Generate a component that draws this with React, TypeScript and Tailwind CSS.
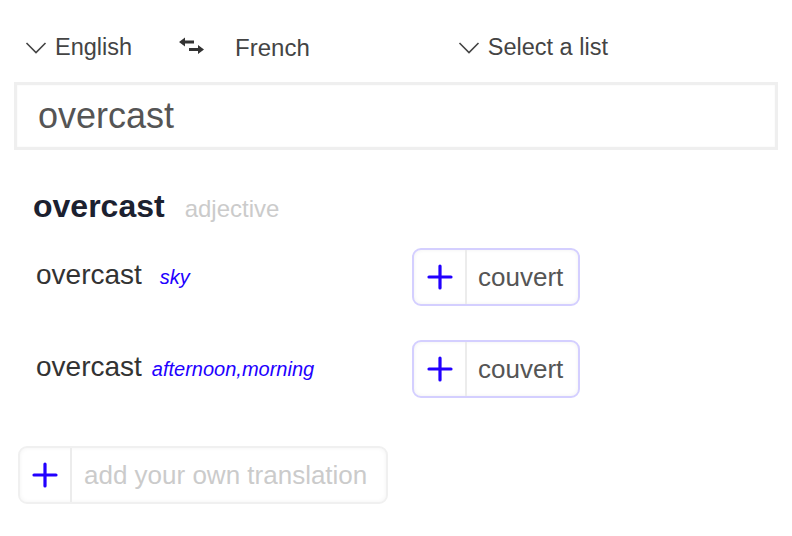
import { useState } from "react";

function Chevron() {
    return (
        <svg width="22" height="14" viewBox="0 0 22 14" fill="none" stroke="#444" strokeWidth="1.6">
            <path d="M1.5 2 L11 11.5 L20.5 2" />
        </svg>
    );
}

function SwapIcon() {
    return (
        <svg width="26" height="18" viewBox="0 0 26 18" fill="#333">
            <path d="M0 5 L6 0.5 L6 3.5 L15 3.5 L15 6.5 L6 6.5 L6 9.5 Z" />
            <path d="M25 12.5 L19 8 L19 11 L10 11 L10 14 L19 14 L19 17 Z" />
        </svg>
    );
}

function Plus() {
    return (
        <svg width="26" height="26" viewBox="0 0 26 26" stroke="#2200ff" strokeWidth="3.2" strokeLinecap="round">
            <path d="M13 2 V24 M2 13 H24" />
        </svg>
    );
}

const rows = [
    { word: "overcast", context: "sky", translation: "couvert", gap: "ml-[18px]" },
    { word: "overcast", context: "afternoon,morning", translation: "couvert", gap: "ml-[10px]" },
];

export default function App() {
    const [query, setQuery] = useState("overcast");

    return (
        <div className="w-[792px] h-[536px] bg-white overflow-hidden font-['Liberation_Sans',Arial,sans-serif]">
            {/* Language bar */}
            <div className="flex items-center h-[48px] mt-[24px] text-[23.5px] text-[#444]">
                <div className="flex items-center ml-[25px]">
                    <Chevron />
                    <span className="ml-[8px]">English</span>
                </div>
                <div className="ml-[47px] mt-[-4px]">
                    <SwapIcon />
                </div>
                <span className="ml-[30px] text-[24px]">French</span>
                <div className="flex items-center ml-[148px]">
                    <Chevron />
                    <span className="ml-[8px]">Select a list</span>
                </div>
            </div>

            {/* Search */}
            <div className="ml-[14px] mt-[10px] w-[764px] h-[68px] border-[3px] border-[#efefef] shadow-[inset_0_0_2px_rgba(0,0,0,0.05)] flex items-center">
                <input
                    value={query}
                    onChange={(e) => setQuery(e.target.value)}
                    className="w-full bg-transparent outline-none pl-[21px] text-[36px] text-[#555] font-['Liberation_Sans',Arial,sans-serif]"
                />
            </div>

            {/* Entry */}
            <div className="flex items-baseline ml-[33px] mt-[32px]">
                <span className="text-[32px] font-bold text-[#1c2130]">overcast</span>
                <span className="ml-[20px] text-[24px] text-[#cbcbcb]">adjective</span>
            </div>

            <div className="mt-[18px] flex flex-col gap-[34px]">
                {rows.map((r, i) => (
                    <div key={i} className="flex items-center">
                        <div className="w-[412px] flex items-baseline pl-[36px] mt-[-4px]">
                            <span className="text-[28px] text-[#333]">{r.word}</span>
                            <span className={`${r.gap} text-[20px] italic text-[#2200ff]`}>{r.context}</span>
                        </div>
                        <button className="flex items-stretch h-[58px] w-[168px] border-2 border-[#d4cfff] rounded-[9px] shadow-[inset_0_0_4px_rgba(0,0,0,0.06)]">
                            <span className="w-[53px] flex items-center justify-center border-r-2 border-[#ececec]">
                                <Plus />
                            </span>
                            <span className="flex items-center pl-[11px] text-[26px] text-[#555]">{r.translation}</span>
                        </button>
                    </div>
                ))}
            </div>

            {/* Add own translation */}
            <div className="ml-[18px] mt-[48px] flex items-stretch h-[58px] w-[370px] border-2 border-[#f0f0f0] rounded-[9px] shadow-[inset_0_0_4px_rgba(0,0,0,0.05)]">
                <span className="w-[52px] flex items-center justify-center border-r-2 border-[#ececec]">
                    <Plus />
                </span>
                <span className="flex items-center pl-[12px] text-[26px] text-[#cbcbcb]">add your own translation</span>
            </div>
        </div>
    );
}
